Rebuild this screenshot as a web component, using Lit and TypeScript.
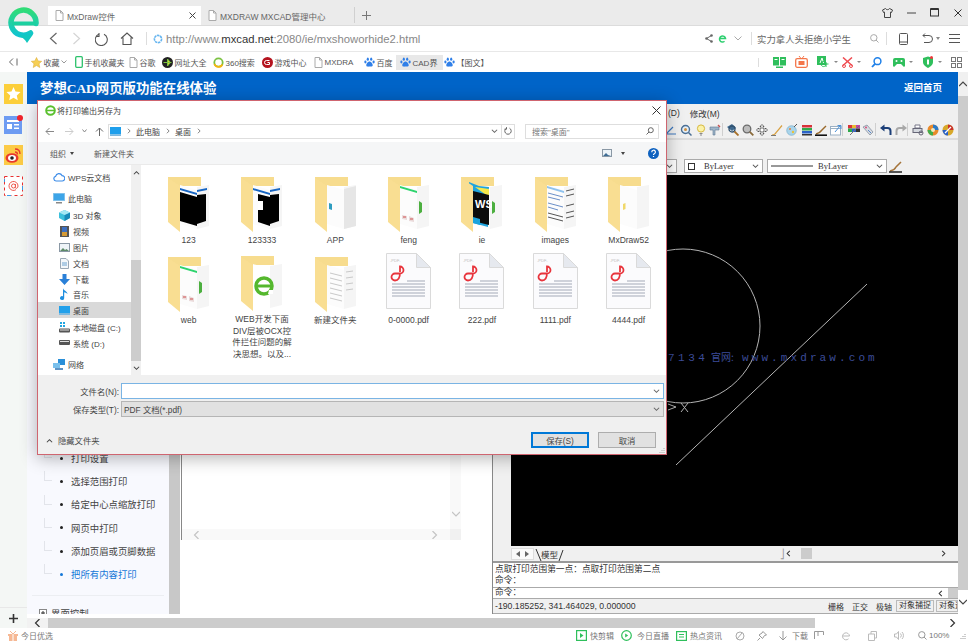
import { LitElement, html, css, svg } from "lit";
import { customElement } from "lit/decorators.js";

const doc = html`<svg width="9" height="11" viewBox="0 0 9 11"><path d="M1 .5h4.500L8 3v7.500H1z" fill="#fff" stroke="#aaa"/><path d="M5.500.5V3H8" fill="none" stroke="#aaa"/></svg>`;
const paw = html`<svg width="11" height="11" viewBox="0 0 11 11"><g fill="#2f7fe8"><ellipse cx="3.800" cy="2.200" rx="1.100" ry="1.600"/><ellipse cx="7.200" cy="2.200" rx="1.100" ry="1.600"/><ellipse cx="1.400" cy="5" rx="1.100" ry="1.400"/><ellipse cx="9.600" cy="5" rx="1.100" ry="1.400"/><path d="M5.500 4.600c-1.600 0-3.400 2.400-3.200 4 .2 1.500 2 1.200 3.200 1s3 .5 3.200-1c.2-1.600-1.600-4-3.200-4z"/></g></svg>`;

const bookmarks = [
  { w: 44, label: "收藏", more: true, icon: html`<svg width="11" height="11" viewBox="0 0 11 11"><path d="M5.500.5l1.600 3.400 3.600.4-2.700 2.500.8 3.700-3.300-1.900-3.300 1.900.8-3.700L.3 4.300l3.600-.4z" fill="#f6cf55" stroke="#d9a52a" stroke-width=".5"/></svg>` },
  { w: 54, label: "手机收藏夹", icon: html`<svg width="8" height="12" viewBox="0 0 8 12"><rect x=".7" y=".7" width="6.600" height="10.600" rx="1" fill="none" stroke="#2cc26b" stroke-width="1.300"/></svg>` },
  { w: 33, label: "谷歌", icon: doc },
  { w: 51, label: "网址大全", icon: html`<svg width="11" height="11" viewBox="0 0 11 11"><circle cx="5.500" cy="5.500" r="5.500" fill="#222"/><path d="M1.500 5.500h8M5.500 2l3 3.500-3 3.500z" fill="#e8d520" stroke="#7cc243"/></svg>` },
  { w: 49, label: "360搜索", icon: html`<svg width="11" height="11" viewBox="0 0 11 11"><circle cx="5.500" cy="5.500" r="4.200" fill="none" stroke="#7cc243" stroke-width="1.800"/><path d="M1.500 7a4.200 4.200 0 0 0 7.800.5" fill="none" stroke="#f5b50f" stroke-width="1.800"/></svg>` },
  { w: 52, label: "游戏中心", icon: html`<svg width="11" height="11" viewBox="0 0 11 11"><circle cx="5.500" cy="5.500" r="5.500" fill="#b5141f"/><path d="M7.500 3.500h-3a2 2 0 0 0 0 4h3V5.500H5.500" fill="none" stroke="#fff"/></svg>` },
  { w: 50, label: "MXDRA", icon: doc },
  { w: 33, label: "百度", icon: paw },
  { w: 47, label: "CAD界", icon: paw, on: true },
  { w: 46, label: "【图文】", icon: paw },
];

// m is the gap above the row, the rows themselves are 16px
const navItems = [
  { m: 0, x: 30, label: "WPS云文档", icon: html`<svg width="12" height="10" viewBox="0 0 12 10"><path d="M3 9a2.400 2.400 0 0 1-.4-4.700A3.400 3.400 0 0 1 9 3.600 2.700 2.700 0 0 1 9.200 9z" fill="#fff" stroke="#3b8be8" stroke-width="1.200"/></svg>` },
  { m: 5, x: 30, label: "此电脑", icon: html`<svg width="12" height="11" viewBox="0 0 12 11"><rect width="12" height="8" fill="#8fc7ec"/><rect x=".8" y=".8" width="10.400" height="6.400" fill="#3da5e8"/><rect x="3" y="9" width="6" height="1.500" fill="#888"/></svg>` },
  { m: 1, x: 35, label: "3D 对象", icon: html`<svg width="11" height="11" viewBox="0 0 11 11"><path d="M5.500 0L11 2.500V8l-5.500 3L0 8V2.500z" fill="#3cc0dc"/><path d="M5.500 5L11 2.500V8l-5.500 3z" fill="#1889b8"/><path d="M5.500 0L11 2.500 5.500 5 0 2.500z" fill="#a5e8f4"/></svg>` },
  { m: 0, x: 35, label: "视频", icon: html`<svg width="9" height="11" viewBox="0 0 9 11"><rect width="9" height="11" fill="#555"/><rect x="2" y="1" width="5" height="5" fill="#3d70c0"/><rect x="2" y="6" width="5" height="4" fill="#d59a35"/></svg>` },
  { m: 0, x: 35, label: "图片", icon: html`<svg width="11" height="9" viewBox="0 0 11 9"><rect x=".5" y=".5" width="10" height="8" fill="#eef4f8" stroke="#8a98a5"/><path d="M1 8l3-3 2 2 1.500-1L10 8z" fill="#5d8a68"/></svg>` },
  { m: 0, x: 35, label: "文档", icon: html`<svg width="9" height="11" viewBox="0 0 9 11"><path d="M.5.5h5.500L8.500 3v7.500h-8z" fill="#f3f7fa" stroke="#9aa8b5"/><path d="M2 5h5M2 7h5" stroke="#6aa2d0"/></svg>` },
  { m: 0, x: 35, label: "下载", icon: html`<svg width="11" height="11" viewBox="0 0 11 11"><path d="M3.500 0h4v5H11l-5.500 6L0 5h3.500z" fill="#2a80d8"/></svg>` },
  { m: -1, x: 35, label: "音乐", icon: html`<svg width="8" height="12" viewBox="0 0 8 12"><path d="M3 0c0 2.500 4.500 3 4.500 6C6.500 4.800 5 4.500 4.200 4.300V10A2.100 2 0 1 1 3 8.200z" fill="#1f8fe0"/></svg>` },
  { m: 0, x: 35, label: "桌面", on: true, icon: html`<svg width="11" height="9" viewBox="0 0 11 9"><rect width="11" height="7.500" fill="#22a0ea"/><rect y="7.500" width="11" height="1.500" fill="#7fb8de"/></svg>` },
  { m: 1, x: 35, label: "本地磁盘 (C:)", icon: html`<svg width="11" height="11" viewBox="0 0 11 11"><rect y="6.500" width="11" height="4" rx="1" fill="#555"/><rect x="1" y="7.500" width="9" height="1" fill="#ddd"/><path d="M1 0h2v2H1zM4 0h2v2H4zM1 3h2v2H1zM4 3h2v2H4z" fill="#22a5e0"/></svg>` },
  { m: 0, x: 35, label: "系统 (D:)", icon: html`<svg width="11" height="6" viewBox="0 0 11 6"><rect width="11" height="5" rx="1" fill="#555"/><rect x="1" y="1" width="9" height="1" fill="#ddd"/></svg>` },
  { m: 5, x: 30, label: "网络", icon: html`<svg width="12" height="11" viewBox="0 0 12 11"><rect x="5" width="7" height="6" fill="#2a8fd8"/><rect x="0" y="4" width="7" height="5" fill="#7ac0ec"/><path d="M2 10h8" stroke="#2a6fb0" stroke-width="1.500"/></svg>` },
];

// little pictures sitting on the sheets inside the folder icons
const thumbs: Record<string, unknown> = {
  black: svg`<path d="M12 11l17 5v2L12 13z" fill="#1766c4"/><path d="M12 15l17 5v29l-17-5z" fill="#000"/><path d="M29 13l10-2v2l-10 2z" fill="#1766c4"/><path d="M29 18l9-1v27l-9 3z" fill="#000"/>`,
  blackPatch: svg`<path d="M12 11l17 5v2L12 13z" fill="#1766c4"/><path d="M17 17l12 3v29l-12-4z" fill="#000"/><path d="M17 24h5v9h-5z" fill="#fff"/><path d="M29 13l10-2v2l-10 2z" fill="#1766c4"/><path d="M29 18l9-1v27l-9 3z" fill="#000"/>`,
  app: svg`<path d="M14 26l3 1v6l-3-1z" fill="#2f9dc0"/><path d="M29 12l12-3v40l-12 3z" fill="#e6e6e6"/>`,
  green: svg`<path d="M12 9l17 5v2L12 11z" fill="#2ed36d"/><path d="M31 24l3 2v9l-3 2z" fill="#4caf3f"/><path d="M14 38l5 1v4l-5-1zM21 39l5 2v4l-5-1z" fill="#eadada"/><path d="M15 40h3M22 42h3" stroke="#d05050"/>`,
  ws: svg`<path d="M8 5l10 4 10 1-1 14v26L12 46 8 40z" fill="#20a4de"/><path d="M14 10l14 2v8z" fill="#f6e94a"/><path d="M12 14l16 4v30l-16-4z" fill="#0c0c0c"/><path d="M12 40l7 2v6l-7-2z" fill="#1aa3dc"/><text x="14" y="31" font-family="Liberation Sans" font-size="11" font-weight="700" fill="#fff">WS</text><path d="M31 24l3 2v9l-3 2z" fill="#4caf3f"/>`,
  lines: svg`<path d="M12 9l17 5v2L12 11z" fill="#8fc2ee"/><g stroke="#6a8fc8" stroke-width="1"><path d="M13 16l15 4M13 20l12 3M13 26l15 4M13 30l10 3"/></g><g stroke="#555" stroke-width="1"><path d="M13 36l15 4M13 40l15 4M31 14l8-2M31 19l8-2M31 29l8-2M31 36l8-2M31 41l8-2"/></g>`,
  note: svg`<path d="M15 27l2.500-1v6l-2.500 1z" fill="#f0d86a"/>`,
  ie: svg`<path d="M12 9h17v44l-17-3z" fill="#fff"/><circle cx="23" cy="30" r="8" fill="none" stroke="#55b82e" stroke-width="3.500"/><path d="M15 30h15" stroke="#55b82e" stroke-width="3"/><path d="M28 34h4v4h-5z" fill="#fff"/>`,
  text: svg`<g stroke="#c9c9c9"><path d="M15 16l12 3M15 21l12 3M15 26l12 3M15 31l12 3M15 36l12 3M15 41l12 3M31 15l7-1M31 21l7-1M31 27l7-1M31 33l7-1"/></g>`,
};

const files = [
  { name: ["123"], t: "black" },
  { name: ["123333"], t: "blackPatch" },
  { name: ["APP"], t: "app" },
  { name: ["feng"], t: "green" },
  { name: ["ie"], t: "ws" },
  { name: ["images"], t: "lines" },
  { name: ["MxDraw52"], t: "note" },
  { name: ["web"], t: "green" },
  { name: ["WEB开发下面", "DIV层被OCX控", "件拦住问题的解", "决思想。以及..."], t: "ie" },
  { name: ["新建文件夹"], t: "text" },
  { name: ["0-0000.pdf"], pdf: true },
  { name: ["222.pdf"], pdf: true },
  { name: ["1111.pdf"], pdf: true },
  { name: ["4444.pdf"], pdf: true },
];

const treeRows = ["打印设置", "选择范围打印", "给定中心点缩放打印", "网页中打印", "添加页眉或页脚数据", "把所有内容打印"];

// CAD toolbar buttons left to right, null is a separator
const cadTools = [
  svg`<path d="M1 10L8 3M1 10h10" fill="none" stroke="#3c78c0" stroke-width="1.200"/>`,
  svg`<circle cx="5.500" cy="5.500" r="4" fill="#e4eef6" stroke="#4a6f96" stroke-width="1.400"/><circle cx="5.500" cy="5.500" r="1.500" fill="#d09040"/><path d="M8.500 8.500l3 3" stroke="#4a6f96" stroke-width="1.500"/>`,
  svg`<circle cx="6" cy="4.500" r="3.600" fill="#fbf2a8" stroke="#d6b840"/><path d="M4.500 9.500h3M5 11h2" stroke="#8a8a8a"/>`,
  svg`<path d="M1 3h9v3H6v5H4V6H1z" fill="#9db4c8" stroke="#5f7a95" stroke-width=".6"/><path d="M9 1l2 2" stroke="#c85050" stroke-width="1.400"/>`,
  null,
  svg`<path d="M0 3l5-3 4 4-4 3z" fill="#3f6a90"/><circle cx="5" cy="5" r="3" fill="none" stroke="#30506e" stroke-width="1.300"/><path d="M7.500 7.500l4 4" stroke="#a87028" stroke-width="1.800"/>`,
  svg`<circle cx="5" cy="5" r="3.800" fill="#bcbcbc" stroke="#6a6a6a" stroke-width="1.300"/><path d="M7.800 7.800l3.500 3.500" stroke="#8a6a3a" stroke-width="1.800"/>`,
  svg`<path d="M6 .5l2 2H7v2.500h2.500V4l2 2-2 2V7H7v2.500h1l-2 2-2-2h1V7H2.500v1l-2-2 2-2v1H5V2.500H4z" fill="#fff" stroke="#444" stroke-width=".8"/>`,
  svg`<path d="M1 11c2.500 0 3.500-1 4.500-3L11 1.500" fill="none" stroke="#d8a040" stroke-width="1.200"/><path d="M0 11.500h5" stroke="#777"/>`,
  svg`<circle cx="5.500" cy="6.500" r="4.800" fill="#a9d4ea" stroke="#6fa7c8" stroke-width=".6"/><circle cx="4" cy="5" r="1" fill="#e8823a"/><circle cx="7" cy="8" r="1.200" fill="#e8c23a"/><path d="M8 3l3-3" stroke="#555"/>`,
  svg`<path d="M1 1h10v2.500H1z" fill="#d8323a"/><path d="M1 4h10v2.500H1z" fill="#2fa84a"/><path d="M1 7h10v2.500H1z" fill="#2a62c8"/><path d="M1 10h10v1.500H1z" fill="#333"/>`,
  svg`<path d="M1 10c2.500-.5 4.500-2 5.500-3.500L11 2" fill="none" stroke="#9a6a2c" stroke-width="1.400"/><path d="M0 11.200h12" stroke="#111" stroke-width="1.600"/>`,
  svg`<rect x=".5" y="2.500" width="10" height="8.500" fill="#fff" stroke="#9ab0c4"/><path d="M.5 4.500h10" stroke="#9ab0c4"/><path d="M5 8l5-6M7.500 1.500H11V5" fill="none" stroke="#4a90d8"/>`,
  null,
  svg`<path d="M0 1h4v3.500H0z" fill="#d8323a"/><path d="M4 1h4v3.500H4z" fill="#e8b832"/><path d="M8 1h4v3.500H8z" fill="#c040a8"/><path d="M0 4.500h4V8H0z" fill="#2fa84a"/><path d="M4 4.500h4V8H4z" fill="#2a62c8"/><path d="M8 4.500h4V8H8z" fill="#333"/><path d="M2 11l9-9" stroke="#777"/>`,
  svg`<path d="M1 3l4-2 6 7-3 3z" fill="#d7dbe2" stroke="#7a8596" stroke-width=".7"/><circle cx="4" cy="3.500" r="1" fill="#d8507a"/><path d="M6 6l3 3" stroke="#5a8ac8"/>`,
  null,
  svg`<path d="M10.500 11V7a3 3 0 0 0-3-3H3" fill="none" stroke="#1c3f78" stroke-width="2"/><path d="M4.500.5L0 4l4.500 3.500z" fill="#1c3f78"/>`,
  svg`<path d="M1.500 11V7a3 3 0 0 1 3-3H9" fill="none" stroke="#a8a8a8" stroke-width="2"/><path d="M7.500.5L12 4 7.500 7.500z" fill="#a8a8a8"/>`,
  null,
  svg`<path d="M3 1h5v3H3z" fill="#fff" stroke="#778"/><rect x="1" y="4.500" width="9" height="4" fill="#d4d8de" stroke="#667"/><circle cx="9" cy="9" r="2" fill="none" stroke="#667"/>`,
  svg`<circle cx="6" cy="6" r="5.500" fill="#e88a2a"/><path d="M6 .5a5.500 5.500 0 0 1 5.500 5.500H6z" fill="#2a7ac8"/><path d="M.5 6A5.500 5.500 0 0 0 6 11.500V6z" fill="#3fae4a"/><circle cx="6" cy="6" r="2" fill="#f4e8c0"/>`,
  svg`<circle cx="6" cy="6" r="5.500" fill="#d8a82a"/><path d="M6 .5a5.500 5.500 0 0 1 5.500 5.500H6z" fill="#c8322a"/><path d="M.5 6A5.500 5.500 0 0 0 6 11.500V6z" fill="#2a62c8"/><path d="M3 9l6-6" stroke="#fff" stroke-width="1.300"/>`,
];

@customElement("app-root")
export class AppRoot extends LitElement {
  static styles = css`
    :host {
      display: block;
      width: 968px;
      height: 642px;
      overflow: hidden;
      position: relative;
      background: #fff;
      font-family: "Liberation Sans", "Noto Sans CJK SC", sans-serif;
      font-size: 8px;
      color: #444;
    }
    svg { display: block; flex: none; }
    .logo { position: absolute; left: 8px; top: 7px; }

    .tabbar { height: 25px; background: #ebebeb; display: flex; align-items: flex-end; padding-left: 48px; border-bottom: 1px solid #dcdcdc; font-size: 8.500px; color: #666; }
    .tab { width: 153px; height: 19px; display: flex; align-items: center; gap: 3px; padding-left: 7px; box-sizing: border-box; }
    .tab.on { background: #fff; }
    .tab.on span { flex: 1; }
    .tab .x { margin-right: 5px; }
    .tab-line { width: 1px; height: 16px; background: #d0d0d0; margin-bottom: 2px; }
    .plus { margin: 0 auto 5px 7px; }
    .wins { display: flex; align-items: center; gap: 14px; padding-right: 6px; height: 25px; }

    .navbar { height: 25px; display: flex; align-items: center; padding-left: 49px; border-bottom: 1px solid #e8e8e8; color: #666; }
    .url { font-size: 11.300px; color: #888; margin-left: 3px; white-space: nowrap; }
    .url b { font-weight: 400; color: #333; }
    .navbar .sep { width: 1px; height: 13px; background: #ddd; }
    .search-txt { font-size: 9.400px; color: #666; width: 113px; white-space: nowrap; }

    .bookmarks { height: 20px; display: flex; align-items: center; padding-left: 8px; font-size: 8px; color: #555; }
    .bm { height: 15px; display: flex; align-items: center; gap: 1.500px; padding-left: 1px; box-sizing: border-box; flex: none; white-space: nowrap; }
    .bm.on { background: #e8e8e8; padding-left: 4px; }
    .bm-tail { margin-left: auto; display: flex; align-items: center; gap: 7px; padding-right: 6px; }
    .bm-tail i { display: block; width: 0; height: 0; border: 2px solid transparent; border-top: 2.500px solid #888; border-bottom: 0; margin-left: -3px; }
    .bm-tail .sep { width: 1px; height: 9px; background: #ddd; margin-right: 7px; }

    .main { height: 556px; display: flex; }
    .rail { width: 27px; background: #f4f7f5; display: flex; flex-direction: column; align-items: center; gap: 11px; padding-top: 12px; box-sizing: border-box; position: relative; }
    .rail .add { margin-top: auto; border-top: 1px solid #e8e8e8; width: 100%; height: 20px; display: flex; align-items: center; justify-content: center; }

    .page { flex: 1; display: flex; flex-direction: column; min-width: 0; }
    .page-top { flex: 1; display: flex; min-height: 0; }
    .content { flex: 1; min-width: 0; display: flex; flex-direction: column; }
    .head { height: 32px; flex: none; background: #0064c8; color: #fff; display: flex; align-items: center; justify-content: space-between; padding: 0 16px 3px 13px; box-sizing: border-box; }
    .head strong { font: 700 13.400px "Liberation Serif", "Noto Sans CJK SC", serif; }
    .head span { font: 700 9.500px "Liberation Serif", "Noto Sans CJK SC", serif; }

    .vbar { width: 10px; flex: none; display: flex; flex-direction: column; background: #ccc; }
    .vbar div { height: 24px; background: #f0f0f0; display: flex; align-items: center; justify-content: center; }
    .vbar div:last-child { margin-top: auto; background: #fff; }

    .body { flex: 1; display: flex; min-height: 0; }
    .tree { width: 142px; flex: none; background: #f8f9fe; padding: 342px 0 0 12px; box-sizing: border-box; overflow: hidden; font-size: 9.400px; color: #444; }
    .tree-row { height: 23.300px; display: flex; align-items: center; position: relative; padding-left: 32px; white-space: nowrap; }
    .tree-row::before { content: ""; position: absolute; left: 5px; top: 2px; width: 7px; height: 9px; border-left: 1px solid #e2e4ea; border-bottom: 1px solid #e2e4ea; }
    .tree-row::after { content: ""; position: absolute; left: 21px; top: 10.500px; width: 3px; height: 3px; border-radius: 50%; background: #222; }
    .tree-row.on { color: #1477d8; }
    .tree-row.on::after { background: #1477d8; }
    .tree hr { border: 0; border-top: 1px solid #eceef2; margin: 9px 5px 10px -7px; }
    .tree-group { display: flex; align-items: center; gap: 4px; font-size: 9.400px; }
    .tree-bar { width: 11px; flex: none; background: #c8c8c8; }

    .mid { width: 312px; flex: none; background: #fff; padding: 0 31px 0 1px; box-sizing: border-box; }
    .frame { height: 436px; border-left: 1px solid #888; display: grid; grid-template-columns: 1fr 11px; grid-template-rows: 1fr 11px; }
    .frame .v { background: #f9f9f9; display: flex; align-items: flex-end; justify-content: center; padding-bottom: 11px; }
    .frame .h { background: #f9f9f9; display: flex; align-items: center; justify-content: space-between; padding: 0 12px 0 11px; }
    .frame .c { background: #f1f1f1; }

    .cad { flex: 1; min-width: 0; display: flex; flex-direction: column; background: #f0f0f0; border-left: 1px solid #888; overflow: hidden; }
    .cad-menu { height: 17px; flex: none; padding-left: 175px; display: flex; align-items: center; gap: 10px; font-size: 8.500px; color: #333; }
    .cad-tools { height: 17px; flex: none; display: flex; align-items: center; padding-left: 171px; border-bottom: 2px solid #dcdcdc; }
    .cad-tools b { display: flex; justify-content: center; width: 14.700px; flex: none; }
    .cad-tools u { display: block; width: 1px; height: 13px; background: #cfcfcf; flex: none; margin: 0 3px 0 -1px; }
    .cad-layer { height: 18px; margin-top: 17px; flex: none; padding-left: 164px; display: flex; align-items: center; gap: 4px; font: 8.500px "Liberation Serif", serif; color: #333; }
    .sel { height: 14px; background: #fff; border: 1px solid #aaa; box-sizing: border-box; display: flex; align-items: center; justify-content: space-between; padding: 0 3px; flex: none; }
    .sel span { display: flex; align-items: center; gap: 9px; }
    .sel.first { width: 20px; margin-right: 3px; justify-content: flex-end; }
    .sel.color { width: 79px; }
    .sel.line { width: 120px; }
    .sel.line span { gap: 5px; }
    .canvas-row { height: 371px; flex: none; padding-left: 18px; }
    .canvas { width: 100%; height: 100%; background: #000; }
    .cad-tabs { height: 15px; flex: none; margin-left: 18px; display: flex; align-items: center; font-size: 8.500px; color: #333; }
    .cad-tabs .arrows { display: flex; align-items: center; gap: 5px; background: #fafafa; border: 1px solid #ddd; padding: 2px 4px; }
    .model { padding: 0 4px 0 6px; position: relative; margin-left: 1px; }
    .model svg { position: absolute; left: 0; top: 0; }
    .cad-tabs .track { margin-left: auto; width: 178px; display: flex; align-items: center; height: 100%; }
    .cad-tabs .track span { color: #999; }
    .cad-tabs .track i { display: block; width: 11px; height: 11px; background: #ccc; margin-left: 9px; flex: none; }
    .cad-tabs .track em { margin-left: auto; margin-right: 11px; font-style: normal; }
    .cmd { flex: none; background: #fff; border-top: 2px solid #999; height: 37px; font-size: 8.700px; color: #333; line-height: 11.300px; box-sizing: border-box; padding: 1px 0 0 2px; }
    .cmd-line { border-top: 1px solid #aaa; display: flex; justify-content: space-between; margin-left: -2px; padding-left: 2px; height: 11px; align-items: center; }
    .cmd-line i { display: flex; align-items: center; gap: 4px; font-style: normal; }
    .cmd-line i::after { content: ""; width: 10px; height: 10px; background: #ccc; }
    .cad-status { height: 14px; flex: none; display: flex; align-items: center; border: 1px solid #aaa; border-left: 0; border-right: 0; font-size: 8.700px; color: #333; white-space: nowrap; }
    .cad-status .coord { flex: 1; padding-left: 2px; }
    .cad-status span { flex: none; padding: 0 4px; font-size: 8px; }
    .cad-status .box { border: 1px solid #bbb; height: 12px; line-height: 10px; padding: 0 2px; box-sizing: border-box; }
    .cad-status .cut { width: 22px; overflow: hidden; margin-left: 2px; }

    .hbar { height: 10px; flex: none; display: flex; margin-top: 4px; background: #f2f2f2; align-items: stretch; }
    .hbar .l { width: 21px; display: flex; align-items: center; justify-content: center; background: #f2f2f2; }
    .hbar .thumb { width: 767px; background: #ccc; }
    .hbar .r { flex: 1; display: flex; align-items: center; justify-content: flex-end; padding-right: 12px; background: #fff; }

    .status { height: 15px; display: flex; align-items: center; font-size: 8px; color: #777; padding-left: 8px; gap: 3px; }
    .st-right { margin-left: auto; display: flex; align-items: center; padding-right: 2px; }
    .st-right > * { flex: none; display: flex; align-items: center; gap: 3px; }

    .dialog { position: absolute; left: 37px; top: 100px; width: 630px; height: 355px; border: 1px solid #cf6570; box-sizing: border-box; background: #fff; box-shadow: 0 3px 16px rgba(0, 0, 0, 0.3); display: flex; flex-direction: column; color: #444; }
    .d-title { height: 19px; flex: none; display: flex; align-items: center; padding: 0 5px 0 7px; gap: 1px; font-size: 8px; }
    .d-title span { flex: 1; }
    .d-addr { height: 22px; flex: none; display: flex; align-items: center; padding: 0 7px 0 7px; }
    .d-addr .arrows { width: 63px; display: flex; align-items: center; gap: 8px; }
    .crumb { width: 407px; height: 15px; border: 1px solid #dedede; box-sizing: border-box; display: flex; align-items: center; font-size: 8px; }
    .crumb .path { flex: 1; display: flex; align-items: center; gap: 4.500px; padding-left: 1px; }
    .crumb .refresh { width: 12px; height: 100%; border-left: 1px solid #dedede; display: flex; align-items: center; justify-content: center; margin-left: 3px; }
    .find { width: 134px; height: 15px; margin-left: 10px; border: 1px solid #dedede; box-sizing: border-box; display: flex; align-items: center; justify-content: space-between; padding: 0 4px 0 6px; color: #777; }
    .d-tools { height: 23px; flex: none; background: #f5f6f7; display: flex; align-items: center; padding: 0 7px 0 12px; font-size: 8px; color: #555; border-bottom: 1px solid #eaeaea; box-sizing: border-box; }
    .caret { display: block; width: 0; height: 0; border: 2.500px solid transparent; border-top: 3px solid #444; border-bottom: 0; }
    .d-main { flex: 1; display: flex; min-height: 0; }
    .d-nav { width: 93px; flex: none; font-size: 8px; padding-top: 4px; box-sizing: border-box; overflow: hidden; }
    .nav-item { height: 16px; display: flex; align-items: center; position: relative; white-space: nowrap; }
    .nav-item.on { background: #d9d9d9; }
    .nav-item .ic { width: 12px; display: flex; justify-content: center; margin-right: 3px; flex: none; }
    .d-scroll { width: 10px; flex: none; background: #f0f0f0; display: flex; flex-direction: column; justify-content: space-between; }
    .d-scroll .t { height: 95px; display: flex; justify-content: center; padding-top: 4px; box-sizing: border-box; }
    .d-scroll .m { flex: 1; background: #cdcdcd; }
    .d-scroll .b { height: 14px; display: flex; justify-content: center; align-items: center; }
    .d-grid { flex: 1; padding: 11px 1px 0 11px; display: grid; grid-template-columns: repeat(7, 73.330px); grid-auto-rows: 80px; font-size: 8.500px; color: #444; text-align: center; line-height: 11.600px; }
    .file { display: flex; flex-direction: column; align-items: center; }
    .file .pic { height: 57px; display: flex; align-items: flex-end; margin-bottom: 2px; }
    .file .pic.doc svg { margin-bottom: 4px; }
    .d-bottom { height: 79px; flex: none; background: #f0f0f0; display: flex; flex-direction: column; padding: 8px 2px 0 0; box-sizing: border-box; font-size: 8.300px; }
    .field { display: grid; grid-template-columns: 81px 1fr; align-items: center; column-gap: 2px; margin-bottom: 2px; }
    .field label { text-align: right; }
    .input { height: 16px; border: 1px solid #7ab4e4; background: #fff; box-sizing: border-box; display: flex; align-items: center; justify-content: space-between; padding: 0 3px; }
    .input.type { background: #e1e1e1; border-color: #b5b5b5; padding-left: 2px; }
    .d-foot { margin-top: 13px; display: flex; align-items: center; padding: 0 8px 0 8px; gap: 9px; }
    .d-foot .hide { flex: 1; display: flex; align-items: center; gap: 5px; }
    .btn { width: 58px; height: 16px; background: #e1e1e1; border: 1px solid #adadad; box-sizing: border-box; display: flex; align-items: center; justify-content: center; }
    .btn.main-btn { border: 2px solid #0078d7; }
    .grip { position: absolute; right: 1px; bottom: 1px; }
  `;

  chev(d: string, stroke = "#777", size = 7) {
    return html`<svg width="${size}" height="${size}" viewBox="0 0 8 8"><path d="${d}" fill="none" stroke="${stroke}" stroke-width="1.200"/></svg>`;
  }

  folder(t: string) {
    return html`<svg width="41" height="56" viewBox="0 0 41 56">
      <path d="M0 0h33v9H0z" fill="#f7dc8e"/>
      <path d="M29 10l12-2v41l-12 3z" fill="#f5f5f5"/>
      <path d="M12 8l17 5v39l-17-5z" fill="#fcfcfc"/>
      ${thumbs[t]}
      <path d="M0 1l12 8v46L0 45z" fill="#f9de92"/>
    </svg>`;
  }

  pdf() {
    return html`<svg width="45" height="56" viewBox="0 0 45 56">
      <path d="M.5.5h30l14 14v41H.5z" fill="#fbfbfd" stroke="#dadada"/>
      <path d="M30.500.5l14 14h-14z" fill="#e6e9ef" stroke="#dadada"/>
      <text x="4" y="9" font-family="Liberation Sans" font-size="4" fill="#bbb">-PDF-</text>
      <path d="M14 19v-5.500a3.500 3.500 0 1 1 0 7H9a3.500 3.500 0 0 0 0 7c3 0 5-2 5-8" fill="none" stroke="#e8343c" stroke-width="1.800"/>
      <g stroke="#a4a9b8" stroke-width="1.200"><path d="M21 28h18M6 31h33M6 34h33M6 37h33M6 40h33M6 43h33"/></g>
    </svg>`;
  }

  render() {
    return html`
      ${this.renderChrome()}
      <div class="main">
        <div class="rail">
          <svg width="19" height="20" viewBox="0 0 19 20"><rect width="19" height="20" fill="#fccf3a"/><path d="M9.500 3l2 4.500 5 .6-3.700 3.300 1 4.900-4.300-2.500-4.300 2.500 1-4.900L2.500 8.100l5-.6z" fill="#fff"/></svg>
          <svg width="19" height="19" viewBox="0 0 19 19"><rect y="1" width="18" height="18" fill="#6d9cf2"/><path d="M3 5h12v2H3zM3 9h5v5H3zM10 9h5v1.500h-5zM10 12.500h5V14h-5z" fill="#fff"/><circle cx="16" cy="3" r="3" fill="#f0242c"/></svg>
          <svg width="19" height="20" viewBox="0 0 19 20"><rect width="19" height="20" fill="#fccb45"/><ellipse cx="8" cy="13" rx="6.500" ry="4.800" fill="#e8392e"/><ellipse cx="8" cy="13" rx="4" ry="3" fill="#fff"/><circle cx="8" cy="13" r="1.800" fill="#222"/><path d="M11 4c3 0 5 2 5 5M11 7c1.500 0 2.500 1 2.500 2.500" fill="none" stroke="#e8392e" stroke-width="1.300"/></svg>
          <svg width="19" height="20" viewBox="0 0 19 20"><rect x=".5" y=".5" width="18" height="19" fill="#fff" stroke="#e83030" stroke-dasharray="3 3"/><path d="M.5 3v3M18.500 10v4M3 19.500h4" stroke="#3d9be8"/><circle cx="9.500" cy="10" r="2" fill="none" stroke="#ee5a4f"/><path d="M11.500 8v3.500c0 1.500 2.500 1 2.500-1.500a4.500 4.500 0 1 0-2 3.700" fill="none" stroke="#ee5a4f"/></svg>
          <div class="add"><svg width="9" height="9" viewBox="0 0 9 9"><path d="M4.500 0v9M0 4.500h9" stroke="#333" stroke-width="1.600"/></svg></div>
        </div>
        <div class="page">
          <div class="page-top">
            <div class="content">
              <div class="head"><strong>梦想CAD网页版功能在线体验</strong><span>返回首页</span></div>
              <div class="body">
                ${this.renderTree()}
                <div class="tree-bar"></div>
                <div class="mid">
                  <div class="frame">
                    <div></div>
                    <div class="v">${this.chev("M0 2l4 4 4-4", "#c4c4c4", 8)}</div>
                    <div class="h">${this.chev("M5.500 0l-4 4 4 4", "#c4c4c4", 8)}${this.chev("M2.500 0l4 4-4 4", "#c4c4c4", 8)}</div>
                    <div class="c"></div>
                  </div>
                </div>
                ${this.renderCad()}
              </div>
            </div>
            <div class="vbar">
              <div>${this.chev("M0 6l4-4 4 4", "#444", 8)}</div>
              <div>${this.chev("M0 2l4 4 4-4", "#444", 8)}</div>
            </div>
          </div>
          <div class="hbar">
            <div class="l">${this.chev("M5.500 0l-4 4 4 4", "#333", 8)}</div>
            <div class="thumb"></div>
            <div class="r">${this.chev("M2.500 0l4 4-4 4", "#333", 8)}</div>
          </div>
        </div>
      </div>
      ${this.renderStatus()}
      <svg class="logo" width="31" height="36" viewBox="0 0 31 36">
        <defs><linearGradient id="lg" x1="0" y1="0" x2="0" y2="1"><stop offset="0" stop-color="#30dc78"/><stop offset="1" stop-color="#10c4d0"/></linearGradient></defs>
        <path d="M28 16.500A12.500 12.500 0 1 0 22.500 26" fill="none" stroke="url(#lg)" stroke-width="5.500" stroke-linecap="round"/>
        <path d="M4 16.500h24" stroke="#1bd0a0" stroke-width="4"/>
        <path d="M9 27.500c3 .8 7 .8 13-.5l3 .5-6 8.500c-2-4-6-6.500-10-8.500z" fill="#12c8c0"/>
      </svg>
      ${this.renderDialog()}
    `;
  }

  renderChrome() {
    return html`
      <div class="tabbar">
        <div class="tab on">${doc}<span>MxDraw控件</span><svg class="x" width="7" height="7" viewBox="0 0 7 7"><path d="M.5.5l6 6M6.500.5l-6 6" stroke="#444"/></svg></div>
        <div class="tab">${doc}<span>MXDRAW MXCAD管理中心</span></div>
        <div class="tab-line"></div>
        <svg class="plus" width="9" height="9" viewBox="0 0 9 9"><path d="M4.500 0v9M0 4.500h9" stroke="#777"/></svg>
        <div class="wins">
          <svg width="11" height="10" viewBox="0 0 11 10"><path d="M3.500.5L.5 2l1 2.500 1-.4V9.500h6V4.100l1 .4 1-2.500-3-1.500c-.5 1.500-3.500 1.500-4 0z" fill="none" stroke="#444"/></svg>
          <svg width="9" height="9" viewBox="0 0 9 9"><path d="M0 5h9" stroke="#444"/></svg>
          <svg width="10" height="9" viewBox="0 0 10 9"><rect x=".5" y="1" width="8" height="7" fill="none" stroke="#333"/><path d="M.5 1h8" stroke="#333" stroke-width="2"/></svg>
          <svg width="8" height="8" viewBox="0 0 8 8"><path d="M.5.5l7 7M7.500.5l-7 7" stroke="#333"/></svg>
        </div>
      </div>
      <div class="navbar">
        <svg width="9" height="13" viewBox="0 0 9 13"><path d="M7.500 1L1.500 6.500l6 5.500" fill="none" stroke="#666" stroke-width="1.200"/></svg>
        <svg style="margin-left:14px" width="9" height="13" viewBox="0 0 9 13"><path d="M1.500 1l6 5.500-6 5.500" fill="none" stroke="#d4d4d4" stroke-width="1.200"/></svg>
        <svg style="margin-left:14px" width="14" height="14" viewBox="0 0 14 14"><path d="M9 2.200A6 6 0 1 1 4 2M4 1v3.500H.8" fill="none" stroke="#555" stroke-width="1.100"/></svg>
        <svg style="margin-left:11px" width="14" height="13" viewBox="0 0 14 13"><path d="M1 6.500L7 1l6 5.500M3 5.500v7h8v-7" fill="none" stroke="#555" stroke-width="1.100"/></svg>
        <div class="sep" style="margin-left:12px"></div>
        <svg style="margin-left:6px" width="10" height="10" viewBox="0 0 10 10"><circle cx="5" cy="5" r="3.600" fill="none" stroke="#66b5ef" stroke-width="1.600" stroke-dasharray="2.500 .6"/></svg>
        <div class="url">http://www.<b>mxcad.net</b>:2080/ie/mxshoworhide2.html</div>
        <svg style="margin-left:auto" width="8" height="9" viewBox="0 0 8 9"><path d="M6.500 1.500L1.500 4.500l5 3" fill="none" stroke="#666"/><circle cx="6.500" cy="1.500" r="1.300" fill="#666"/><circle cx="1.500" cy="4.500" r="1.300" fill="#666"/><circle cx="6.500" cy="7.500" r="1.300" fill="#666"/></svg>
        <svg style="margin-left:5px" width="9" height="9" viewBox="0 0 9 9"><path d="M1.500 4.500h6a3 3 0 1 0-1 2.800" fill="none" stroke="#2ecf70" stroke-width="1.500"/></svg>
        <svg style="margin-left:7px" width="8" height="5" viewBox="0 0 8 5"><path d="M.5.5L4 4 7.500.5" fill="none" stroke="#aaa"/></svg>
        <div class="sep" style="margin:0 5px 0 9px"></div>
        <div class="search-txt">实力拿人头拒绝小学生</div>
        <svg width="9" height="9" viewBox="0 0 9 9"><circle cx="3.800" cy="3.800" r="3.200" fill="none" stroke="#aaa"/><path d="M6 6l2.500 2.500" stroke="#aaa"/></svg>
        <div class="sep" style="margin:0 12px 0 7px"></div>
        <svg width="9" height="12" viewBox="0 0 9 12"><rect x=".5" y=".5" width="8" height="11" rx="1" fill="none" stroke="#555"/><path d="M.5 9h8" stroke="#555"/></svg>
        <svg style="margin-left:14px" width="11" height="11" viewBox="0 0 11 11"><path d="M1 2.500h6a3.200 3.200 0 0 1 0 7H2M3 .5l-2 2 2 2" fill="none" stroke="#555"/></svg>
        <span class="caret" style="margin-left:3px;border-top-color:#888"></span>
        <svg style="margin:0 8px 0 9px" width="11" height="9" viewBox="0 0 11 9"><path d="M0 .5h11M0 4.500h11M0 8.500h11" stroke="#555"/></svg>
      </div>
      <div class="bookmarks">
        <svg style="margin-right:10px" width="12" height="8" viewBox="0 0 12 8"><path d="M5 .5L1.500 4 5 7.500M9 .5v7" fill="none" stroke="#666"/></svg>
        ${bookmarks.map(
          (b) => html`<div class="bm ${b.on ? "on" : ""}" style="width:${b.w}px">
            ${b.icon}<span>${b.label}</span>
            ${b.more ? html`<svg width="6" height="4" viewBox="0 0 6 4"><path d="M.5.5L3 3 5.500.5" fill="none" stroke="#999"/></svg>` : ""}
          </div>`
        )}
        <div class="bm-tail">
          <div class="sep"></div>
          <svg width="13" height="11" viewBox="0 0 13 11"><path d="M0 0h6v8.500H0zM7 0h6v8.500H7zM3 9.500h7V11H3z" fill="#2fbf5c"/><path d="M1.500 2.500h3M8.500 2.500h3" stroke="#fff"/></svg>
          <svg style="margin-left:2px" width="13" height="12" viewBox="0 0 13 12"><rect x=".7" y="2.700" width="11.600" height="8.600" rx="1.500" fill="none" stroke="#f4764a" stroke-width="1.300"/><rect x="3.500" y="5" width="6" height="4" fill="#f4764a"/><path d="M4 0l2 2.500M9 0L7 2.500" stroke="#f4764a"/></svg>
          <svg style="margin-left:2px" width="13" height="12" viewBox="0 0 13 12"><path d="M0 0h9v9H0z" fill="#2fbf5c"/><path d="M3 7l2-5 1.500 5" fill="none" stroke="#fff"/><path d="M9 8a2.500 2.500 0 1 0 0 .1M6.500 8h5M9 6v5" stroke="#2fbf5c" fill="none"/></svg>
          <i></i>
          <svg style="margin-left:-3px" width="11" height="11" viewBox="0 0 11 11"><path d="M1 .5l9 8M10 .5l-9 8" stroke="#ef4b50" stroke-width="1.500"/><circle cx="2" cy="9" r="1.500" fill="none" stroke="#ef4b50"/><circle cx="9" cy="9" r="1.500" fill="none" stroke="#ef4b50"/></svg>
          <i></i>
          <svg style="margin-left:3px" width="11" height="11" viewBox="0 0 11 11"><circle cx="6.500" cy="4.200" r="3.400" fill="none" stroke="#1f80e8" stroke-width="1.500"/><path d="M4 6.800L1 10" stroke="#1f80e8" stroke-width="1.800"/></svg>
          <svg style="margin-left:4px" width="12" height="9" viewBox="0 0 12 9"><path d="M2 0h8a2 2 0 0 1 2 2v6l-1 1-3-3H4L1 9 0 8V2a2 2 0 0 1 2-2z" fill="#2fbf5c"/><circle cx="3.500" cy="3" r="1" fill="#fff"/><circle cx="8.500" cy="3" r="1" fill="#fff"/></svg>
          <i></i>
          <svg style="margin-left:2px" width="12" height="12" viewBox="0 0 12 12"><path d="M1 2l5-1.500L11 2v4c0 3-2.500 4.500-5 6-2.500-1.500-5-3-5-6z" fill="#2fbf5c"/><path d="M6 3.500v5" stroke="#fff" stroke-width="2"/><circle cx="9.500" cy="1.500" r="1.500" fill="#f0383c"/></svg>
          <i></i>
          <svg style="margin-left:2px" width="11" height="11" viewBox="0 0 11 11"><g fill="none" stroke="#777"><rect x=".5" y=".5" width="4" height="4"/><rect x="6.500" y=".5" width="4" height="4"/><rect x=".5" y="6.500" width="4" height="4"/><rect x="6.500" y="6.500" width="4" height="4"/></g></svg>
        </div>
      </div>
    `;
  }

  renderTree() {
    return html`<div class="tree">
      ${treeRows.map((r, i) => html`<div class="tree-row ${i === treeRows.length - 1 ? "on" : ""}">${r}</div>`)}
      <hr />
      <div class="tree-group">
        <svg width="8" height="8" viewBox="0 0 8 8"><rect x=".5" y=".5" width="7" height="7" fill="#fff" stroke="#888"/><path d="M2 4h4M4 2v4" stroke="#333"/></svg>
        界面控制
      </div>
    </div>`;
  }

  renderCad() {
    return html`<div class="cad">
      <div class="cad-menu"><span>(D)</span><span>修改(M)</span></div>
      <div class="cad-tools">
        ${cadTools.map((c) =>
          c === null ? html`<u></u>` : html`<b><svg width="12" height="12" viewBox="0 0 12 12">${c}</svg></b>`
        )}
      </div>
      <div class="cad-layer">
        <div class="sel first">${this.chev("M1 2l3 3 3-3", "#555", 7)}</div>
        <div class="sel color"><span><svg width="7" height="7" viewBox="0 0 7 7"><rect x=".5" y=".5" width="6" height="6" fill="#fff" stroke="#333"/></svg>ByLayer</span>${this.chev("M1 2l3 3 3-3", "#555", 7)}</div>
        <div class="sel line"><span><svg width="42" height="2" viewBox="0 0 42 2"><path d="M0 1h42" stroke="#333"/></svg>ByLayer</span>${this.chev("M1 2l3 3 3-3", "#555", 7)}</div>
        <svg style="margin-left:-2px" width="13" height="13" viewBox="0 0 13 13"><path d="M1 11c3-.5 5-2 6-4l5-5" fill="none" stroke="#a5743a" stroke-width="1.500"/><path d="M0 12h13" stroke="#222" stroke-width="1.500"/></svg>
      </div>
      <div class="canvas-row">
        <svg class="canvas" viewBox="0 0 447 371" width="447" height="371">
          <circle cx="172" cy="151" r="77" fill="none" stroke="#b4b4b4"/>
          <path d="M165 290L356 109" stroke="#b4b4b4"/>
          <g fill="#3c4c98">
            <text x="157" y="186" font-family="Liberation Mono, monospace" font-size="11" letter-spacing="3.500">7134</text>
            <text x="200" y="186" font-family="Noto Sans CJK SC, sans-serif" font-size="10">官网:</text>
            <text x="231" y="186" font-family="Liberation Mono, monospace" font-size="11" letter-spacing="3.100">www.mxdraw.com</text>
          </g>
          <path d="M157 229l8 3-8 3M170 228l7 9M177 228l-7 9" fill="none" stroke="#b4b4b4"/>
        </svg>
      </div>
      <div class="cad-tabs">
        <div class="arrows"><svg width="4" height="6" viewBox="0 0 4 6"><path d="M4 0v6L0 3z" fill="#666"/></svg><svg width="4" height="6" viewBox="0 0 4 6"><path d="M0 0v6l4-3z" fill="#666"/></svg></div>
        <div class="model"><svg width="30" height="15" viewBox="0 0 30 15"><path d="M1 1l5 12M24 13l4-11" stroke="#333" fill="none"/></svg>模型</div>
        <div class="track"><span>⎦</span>${this.chev("M5.500 1l-3 3 3 3", "#333", 7)}<i></i><em>${this.chev("M2.500 1l3 3-3 3", "#333", 7)}</em></div>
      </div>
      <div class="cmd">
        <div>点取打印范围第一点：点取打印范围第二点</div>
        <div>命令：</div>
        <div class="cmd-line"><span>命令：</span><i>${this.chev("M5.500 1l-3 3 3 3", "#333", 7)}</i></div>
      </div>
      <div class="cad-status">
        <div class="coord">-190.185252, 341.464029, 0.000000</div>
        <span>栅格</span><span>正交</span><span>极轴</span>
        <span class="box">对象捕捉</span>
        <span class="box cut">对象追踪</span>
      </div>
    </div>`;
  }

  renderStatus() {
    return html`<div class="status">
      <svg width="10" height="10" viewBox="0 0 10 10"><path d="M0 3h10v2H0zM1 5h8v5H1z" fill="#f6b894"/><path d="M5 3v7" stroke="#fff"/><path d="M2 0l3 3 3-3" fill="none" stroke="#f6b894"/></svg>
      今日优选
      <div class="st-right">
        <span><svg width="11" height="11" viewBox="0 0 11 11"><rect x=".6" y=".6" width="9.800" height="9.800" fill="none" stroke="#2fbf5c" stroke-width="1.200"/><path d="M4 3l3.500 2.500L4 8z" fill="#2fbf5c"/></svg>快剪辑</span>
        <span style="margin-left:7px"><svg width="11" height="11" viewBox="0 0 11 11"><circle cx="5.500" cy="5.500" r="4.800" fill="none" stroke="#2fbf5c" stroke-width="1.200"/><path d="M4.200 3.500l3 2-3 2z" fill="#2fbf5c"/></svg><span style="margin-left:2px">今日直播</span></span>
        <span style="margin-left:7px"><svg width="11" height="10" viewBox="0 0 11 10"><rect x=".6" y=".6" width="9.800" height="8.800" fill="none" stroke="#2fbf5c" stroke-width="1.200"/><path d="M3 3.500h5M3 6h5" stroke="#2fbf5c"/></svg>热点资讯</span>
        <svg style="margin-left:13px" width="10" height="10" viewBox="0 0 10 10"><circle cx="5" cy="5" r="4" fill="none" stroke="#aaa"/><path d="M2 8l5-6" stroke="#aaa"/></svg>
        <svg style="margin-left:12px" width="10" height="10" viewBox="0 0 10 10"><path d="M6 .5l3.500 3.500-2 .5-2 3-3.500-3.500 3-2zM3 7l-2.500 2.500" fill="none" stroke="#999"/></svg>
        <span style="margin-left:12px;gap:5px"><svg width="8" height="10" viewBox="0 0 8 10"><path d="M4 0v9M.5 5.500L4 9l3.500-3.500" fill="none" stroke="#999"/></svg>下载</span>
        <svg style="margin-left:6px" width="10" height="9" viewBox="0 0 10 9"><path d="M.5 8V.5h9V4M4 .5V5" fill="none" stroke="#999"/></svg>
        <svg style="margin-left:17px" width="10" height="10" viewBox="0 0 10 10"><path d="M1.500 5h7a3.500 3.500 0 1 0-1 2.800" fill="none" stroke="#bbb"/></svg>
        <svg style="margin-left:17px" width="9" height="10" viewBox="0 0 9 10"><path d="M.5 3h6v6.500h-6zM3 3V.5h5.500V7H7" fill="none" stroke="#bbb"/></svg>
        <svg style="margin-left:17px" width="10" height="9" viewBox="0 0 10 9"><path d="M.5 3h2l2-2.500v8l-2-2.500h-2zM6.500 2.500a3 3 0 0 1 0 4M8 1a5 5 0 0 1 0 7" fill="none" stroke="#bbb"/></svg>
        <svg style="margin-left:14px" width="9" height="9" viewBox="0 0 9 9"><circle cx="3.800" cy="3.800" r="3.200" fill="none" stroke="#999"/><path d="M6 6l2.500 2.500" stroke="#999"/></svg>
        <span style="margin-left:2px;width:31px">100%</span>
        <svg width="6" height="6" viewBox="0 0 6 6"><path d="M5 1v1M3 3v1M5 3v1M1 5v1M3 5v1M5 5v1" stroke="#999"/></svg>
      </div>
    </div>`;
  }

  renderDialog() {
    const step = "M2.500 1l3 3-3 3";
    return html`<div class="dialog">
      <div class="d-title">
        <svg width="11" height="11" viewBox="0 0 11 11"><circle cx="5.500" cy="5.500" r="4.300" fill="none" stroke="#5ac02e" stroke-width="2"/><path d="M2 5.500h7" stroke="#5ac02e" stroke-width="1.500"/></svg>
        <span>将打印输出另存为</span>
        <svg width="9" height="9" viewBox="0 0 9 9"><path d="M.5.5l8 8M8.500.5l-8 8" stroke="#333"/></svg>
      </div>
      <div class="d-addr">
        <div class="arrows">
          <svg width="9" height="9" viewBox="0 0 9 9"><path d="M4.500 1L1 4.500 4.500 8M1 4.500h8" fill="none" stroke="#888"/></svg>
          <svg style="margin-left:3px" width="9" height="9" viewBox="0 0 9 9"><path d="M4.500 1L8 4.500 4.500 8M8 4.500H0" fill="none" stroke="#ccc"/></svg>
          <svg width="5" height="4" viewBox="0 0 5 4"><path d="M.5.5L2.500 3l2-2.500" fill="none" stroke="#888"/></svg>
          <svg width="9" height="9" viewBox="0 0 9 9"><path d="M1 4.500L4.500 1 8 4.500M4.500 1v8" fill="none" stroke="#666"/></svg>
        </div>
        <div class="crumb">
          <div class="path">
            <svg width="11" height="9" viewBox="0 0 11 9"><rect width="11" height="7.500" fill="#1f9fec"/><rect y="7.500" width="11" height="1.500" fill="#7fb8de"/></svg>
            ${this.chev(step, "#777", 6)}<span>此电脑</span>${this.chev(step, "#777", 6)}<span>桌面</span>${this.chev(step, "#777", 6)}
          </div>
          ${this.chev("M1 2l3 3 3-3", "#666", 7)}
          <div class="refresh"><svg width="8" height="8" viewBox="0 0 8 8"><path d="M5.500 1.200A3.200 3.200 0 1 1 2.500 1.200M2.500.2v2H.5" fill="none" stroke="#666"/></svg></div>
        </div>
        <div class="find"><span>搜索"桌面"</span><svg width="8" height="8" viewBox="0 0 8 8"><circle cx="4.800" cy="3.200" r="2.500" fill="none" stroke="#666"/><path d="M3 5L.5 7.500" stroke="#666"/></svg></div>
      </div>
      <div class="d-tools">
        <span>组织</span><span class="caret" style="margin-left:4px"></span>
        <span style="margin-left:20px">新建文件夹</span>
        <svg style="margin-left:auto" width="10" height="8" viewBox="0 0 10 8"><rect x=".5" y=".5" width="9" height="7" fill="#eef4f8" stroke="#8a98a5"/><path d="M1 7l3-3 2 2 3 1z" fill="#3f6d95"/></svg>
        <span class="caret" style="margin-left:9px"></span>
        <svg style="margin-left:23px" width="11" height="11" viewBox="0 0 11 11"><circle cx="5.500" cy="5.500" r="5.500" fill="#0f62c0"/><path d="M3.800 4.200a1.800 1.800 0 1 1 2.500 1.500c-.6.300-.8.600-.8 1.200M5.500 8v1" fill="none" stroke="#fff" stroke-width="1.200"/></svg>
      </div>
      <div class="d-main">
        <div class="d-nav">
          ${navItems.map(
            (n) => html`<div class="nav-item ${n.on ? "on" : ""}" style="padding-left:${n.x - 15}px;margin-top:${n.m}px">
              <span class="ic">${n.icon}</span>${n.label}
            </div>`
          )}
        </div>
        <div class="d-scroll">
          <div class="t">${this.chev("M1 6l3-3 3 3", "#444", 7)}</div>
          <div class="m"></div>
          <div class="b">${this.chev("M1 2l3 3 3-3", "#444", 7)}</div>
        </div>
        <div class="d-grid">
          ${files.map(
            (f) => html`<div class="file">
              <div class="pic ${f.pdf ? "doc" : ""}">${f.pdf ? this.pdf() : this.folder(f.t as string)}</div>
              ${f.name.map((l) => html`<div>${l}</div>`)}
            </div>`
          )}
        </div>
      </div>
      <div class="d-bottom">
        <div class="field"><label>文件名(N):</label><div class="input"><span></span>${this.chev("M1 2l3 3 3-3", "#666", 7)}</div></div>
        <div class="field"><label>保存类型(T):</label><div class="input type"><span>PDF 文档(*.pdf)</span>${this.chev("M1 2l3 3 3-3", "#666", 7)}</div></div>
        <div class="d-foot">
          <div class="hide">${this.chev("M1 6l3-3 3 3", "#444", 7)}隐藏文件夹</div>
          <div class="btn main-btn">保存(S)</div>
          <div class="btn">取消</div>
        </div>
      </div>
      <svg class="grip" width="6" height="6" viewBox="0 0 6 6"><path d="M5 1v1M3 3v1M5 3v1M1 5v1M3 5v1M5 5v1" stroke="#aaa"/></svg>
    </div>`;
  }
}
